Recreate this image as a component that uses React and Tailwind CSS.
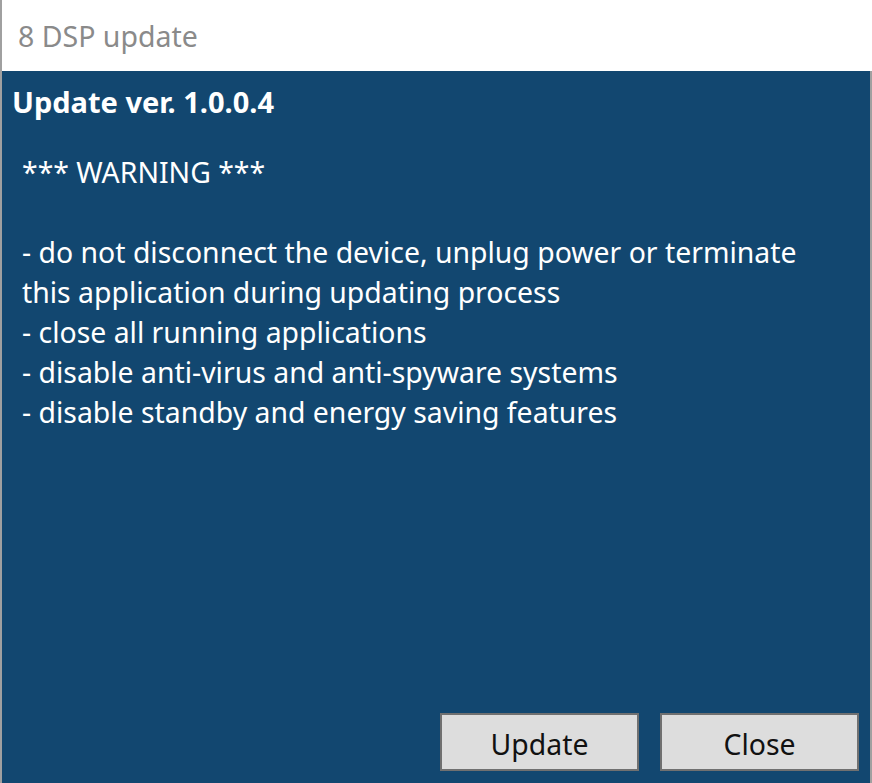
import React from 'react';

const lines = [
    '*** WARNING ***',
    '',
    '- do not disconnect the device, unplug power or terminate',
    'this application during updating process',
    '- close all running applications',
    '- disable anti-virus and anti-spyware systems',
    '- disable standby and energy saving features',
];

const DialogButton = ({ children }) => (
    <button className="w-[199px] h-[58px] pt-[4px] bg-[#dddddd] border-2 border-[#707070] text-[28.4px] text-[#111] leading-none">
        {children}
    </button>
);

const App = () => {
    return (
        <div className="w-[872px] h-[783px] flex flex-col border-l-2 border-[#a0a0a0] bg-white overflow-hidden" style={{ fontFamily: '"Noto Sans", sans-serif' }}>
            {/* barre de titre */}
            <div className="h-[71px] shrink-0 flex items-center pl-[16px] pt-[2px] text-[28.5px] text-[#8a8a8a] bg-white">
                8 DSP update
            </div>

            {/* contenu */}
            <div className="flex-1 flex flex-col bg-[#124770] border-r-2 border-[#a0a0a0] text-white">
                <h1 className="pl-[10px] pt-[12px] text-[29px] font-bold leading-[38px]">Update ver. 1.0.0.4</h1>
                <div className="pl-[20px] pt-[31px] text-[28.4px] leading-[40px]">
                    {lines.map((line, i) => (
                        <div key={i} className="h-[40px] whitespace-pre">{line}</div>
                    ))}
                </div>
                <div className="mt-auto flex justify-end gap-[21px] pr-[11px] pb-[12px]">
                    <DialogButton>Update</DialogButton>
                    <DialogButton>Close</DialogButton>
                </div>
            </div>
        </div>
    );
};

export default App;
